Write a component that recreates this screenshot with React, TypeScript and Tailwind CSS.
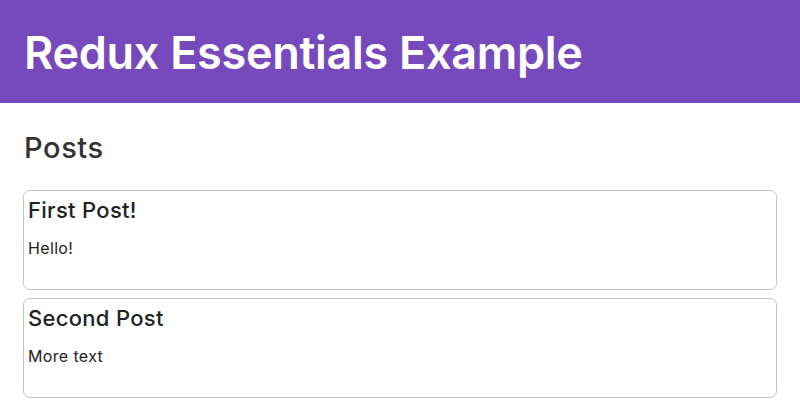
export default function App() {
  const posts = [
    { title: "First Post!", content: "Hello!" },
    { title: "Second Post", content: "More text" },
  ];
  return (
    <div className="min-h-[414px] bg-white" style={{ fontFamily: "Inter, 'Noto Sans', sans-serif" }}>
      <nav className="h-[103px] bg-[#764abc] px-6 flex items-center">
        <h1 className="text-[45px] font-semibold text-white leading-none tracking-[-0.3px] pt-[2px]">Redux Essentials Example</h1>
      </nav>
      <section className="px-[23px] pt-[27px]">
        <h2 className="text-[29px] leading-[36px] text-[#333] font-medium mb-[24px] pl-[1px] tracking-[0.6px]">Posts</h2>
        <div className="flex flex-col gap-[8px]">
          {posts.map((p) => (
            <article key={p.title} className="h-[100px] border border-[#c4c4c4] rounded-[7px] px-[4px] pt-[5px]">
              <h3 className="text-[22px] leading-[28px] text-[#222] font-medium tracking-[0.3px]">{p.title}</h3>
              <p className="text-[16px] leading-[20px] text-[#222] mt-[14px] tracking-[0.35px]">{p.content}</p>
            </article>
          ))}
        </div>
      </section>
    </div>
  );
}
